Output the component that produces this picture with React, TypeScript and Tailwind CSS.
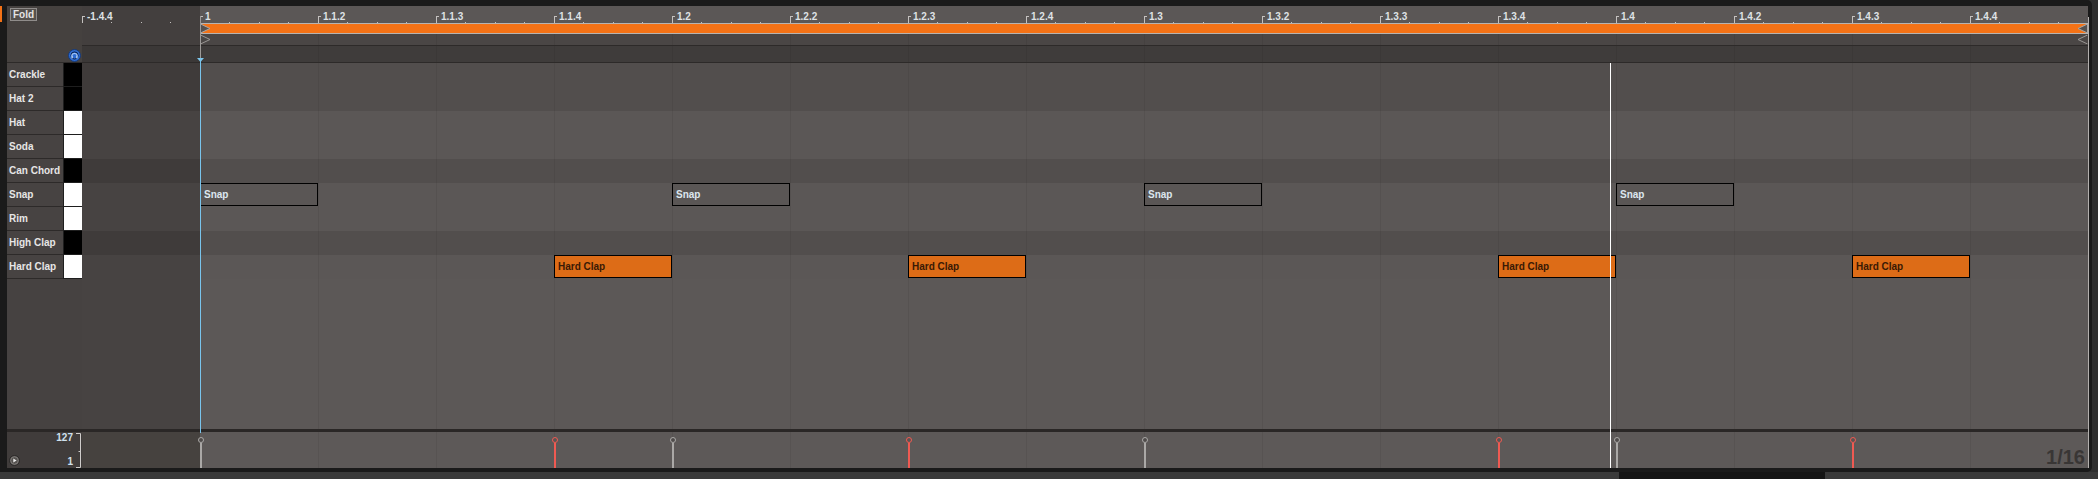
import React from "react";

const BEAT = 118;
const ROW = 24;

type Row = { name: string; black: boolean };

const rows: Row[] = [
  { name: "Crackle", black: true },
  { name: "Hat 2", black: true },
  { name: "Hat", black: false },
  { name: "Soda", black: false },
  { name: "Can Chord", black: true },
  { name: "Snap", black: false },
  { name: "Rim", black: false },
  { name: "High Clap", black: true },
  { name: "Hard Clap", black: false },
];

const rulerLabels = [
  "1", "1.1.2", "1.1.3", "1.1.4",
  "1.2", "1.2.2", "1.2.3", "1.2.4",
  "1.3", "1.3.2", "1.3.3", "1.3.4",
  "1.4", "1.4.2", "1.4.3", "1.4.4",
];

type Note = { row: number; beat: number; name: string; orange: boolean };

const notes: Note[] = [
  { row: 5, beat: 0, name: "Snap", orange: false },
  { row: 5, beat: 4, name: "Snap", orange: false },
  { row: 5, beat: 8, name: "Snap", orange: false },
  { row: 5, beat: 12, name: "Snap", orange: false },
  { row: 8, beat: 3, name: "Hard Clap", orange: true },
  { row: 8, beat: 6, name: "Hard Clap", orange: true },
  { row: 8, beat: 11, name: "Hard Clap", orange: true },
  { row: 8, beat: 14, name: "Hard Clap", orange: true },
];

function RulerCell({ label }: { label: string }) {
  return (
    <div className="relative w-[118px] shrink-0 pl-[5px] pt-[6px] text-[10px] font-bold leading-none text-[#dfe2e5]">
      <span className="absolute left-0 top-[10px] h-[7px] w-px bg-[#c4c1bf]" />
      <span className="absolute left-0 top-[10px] h-px w-[3px] bg-[#c4c1bf]" />
      <span className="absolute left-[29px] top-[16px] h-px w-px bg-[#c4c1bf]" />
      <span className="absolute left-[59px] top-[16px] h-px w-px bg-[#c4c1bf]" />
      <span className="absolute left-[88px] top-[16px] h-px w-px bg-[#c4c1bf]" />
      {label}
    </div>
  );
}

// faint vertical line on every beat
function BeatCells() {
  return (
    <div className="pointer-events-none absolute inset-0 flex">
      {rulerLabels.map((l, i) => (
        <div
          key={l}
          className={i === 0 ? "w-[118px] shrink-0" : "w-[118px] shrink-0 border-l border-black/[0.06]"}
        />
      ))}
    </div>
  );
}

function Stem({ beat, red }: { beat: number; red: boolean }) {
  return (
    <div
      className="absolute top-[5px] bottom-0 flex w-[6px] flex-col items-center"
      style={{ left: beat * BEAT - 2 }}
    >
      <div
        className={
          red
            ? "h-[6px] w-[6px] rounded-full border-[1.5px] border-[#ef5a52] bg-[#5a5453]"
            : "h-[6px] w-[6px] rounded-full border-[1.5px] border-[#aaa8a6] bg-[#4f4b4a]"
        }
      />
      <div className={red ? "w-[2px] flex-1 bg-[#ef5a52]" : "w-[2px] flex-1 bg-[#aaa8a6]"} />
    </div>
  );
}

function PreviewIcon() {
  return (
    <svg width="13" height="13" viewBox="0 0 13 13">
      <circle cx="6.5" cy="6.5" r="6" fill="#2d6bd3" stroke="#173a78" />
      <circle cx="6.5" cy="6.5" r="3.6" fill="none" stroke="#10244d" strokeWidth="1" />
      <path d="M3.8 7.2 A2.7 2.7 0 0 1 9.2 7.2" fill="none" stroke="#a9c9f6" strokeWidth="1.1" />
      <rect x="3.3" y="7" width="1.6" height="2.4" fill="#a9c9f6" />
      <rect x="8.1" y="7" width="1.6" height="2.4" fill="#a9c9f6" />
    </svg>
  );
}

function PlayIcon() {
  return (
    <svg width="11" height="11" viewBox="0 0 11 11">
      <circle cx="5.5" cy="5.5" r="5" fill="#55524f" stroke="#2b2928" />
      <circle cx="5.5" cy="5.5" r="3.8" fill="none" stroke="#8a8785" strokeWidth="0.8" />
      <path d="M4.3 3.4 L7.6 5.5 L4.3 7.6 Z" fill="#ececec" />
    </svg>
  );
}

export default function App() {
  return (
    <div className="h-[479px] w-[2098px] overflow-hidden bg-[#2f2f2f] font-['Liberation_Sans',Arial,sans-serif]">
      <div className="flex h-[472px] w-[2092px] rounded-r-[5px] bg-[#1a1a1a] pt-[6px] pb-[4px]">
        {/* left frame edge */}
        <div className="flex w-[7px] flex-col">
          <div className="h-[16px] w-[2px] bg-[#f47216]" />
        </div>

        {/* editor */}
        <div className="relative flex w-[2081px] flex-col">
          {/* ruler */}
          <div className="flex h-[57px]">
            <div className="flex w-[75px] flex-col justify-between border-b border-[#2d2a29] bg-[#45413f]">
              <div className="ml-[3px] mt-[2px] flex h-[13px] w-[27px] items-center justify-center border border-[#8f8c8a] bg-[#55514e] text-[10px] font-bold leading-none text-[#e4e4e4]">
                Fold
              </div>
              <div className="mr-[1px] self-end">
                <PreviewIcon />
              </div>
            </div>
            <div className="flex w-[118px] flex-col">
              <div className="flex h-[39px] bg-[#433f3e]">
                <RulerCell label="-1.4.4" />
              </div>
              <div className="h-[18px] border-y border-[#2d2a29] bg-[#3b3837]" />
            </div>
            <div className="flex w-[1888px] flex-col">
              <div className="flex h-[17px] bg-[#5b5756]">
                {rulerLabels.map((l) => (
                  <RulerCell key={l} label={l} />
                ))}
              </div>
              <div className="relative h-[11px] border-y border-[#b7b3b0] bg-[#f47216]">
                <svg className="absolute left-0 top-0" width="11" height="9" viewBox="0 0 11 9">
                  <path d="M0.5 0 L10 4.5 L0.5 9 Z" fill="#55514f" stroke="#a9a6a4" strokeWidth="1" />
                </svg>
                <svg className="absolute right-0 top-0" width="11" height="9" viewBox="0 0 11 9">
                  <path d="M10.5 0 L1 4.5 L10.5 9 Z" fill="#55514f" stroke="#a9a6a4" strokeWidth="1" />
                </svg>
              </div>
              <div className="relative h-[11px] bg-[#4a4645]">
                <BeatCells />
                <svg className="absolute left-0 top-[1px]" width="11" height="9" viewBox="0 0 11 9">
                  <path d="M0.5 0 L10 4.5 L0.5 9" fill="none" stroke="#9a9795" strokeWidth="1" />
                </svg>
                <svg className="absolute right-0 top-[1px]" width="11" height="9" viewBox="0 0 11 9">
                  <path d="M10.5 0 L1 4.5 L10.5 9" fill="none" stroke="#9a9795" strokeWidth="1" />
                </svg>
              </div>
              <div className="relative h-[18px] border-y border-[#2d2a29] bg-[#3f3c3b]">
                <BeatCells />
              </div>
            </div>
          </div>

          {/* note rows */}
          <div className="flex h-[366px]">
            <div className="flex w-[75px] flex-col bg-[#464241]">
              {rows.map((r) => (
                <div key={r.name} className="flex h-[24px]">
                  <div className="flex w-[56px] items-center border-b border-[#2d2a29] bg-[#474342] pl-[2px] text-[10px] font-bold leading-none text-[#e6e6e6]">
                    {r.name}
                  </div>
                  <div
                    className={
                      r.black
                        ? "w-[19px] border-b border-l border-[#1e1e1e] bg-black"
                        : "w-[19px] border-b border-l border-[#1e1e1e] bg-white"
                    }
                  />
                </div>
              ))}
            </div>
            <div className="flex w-[118px] flex-col bg-[#474342]">
              {rows.map((r) => (
                <div key={r.name} className={r.black ? "h-[24px] bg-[#3f3b3a]" : "h-[24px] bg-[#474342]"} />
              ))}
            </div>
            <div className="relative flex w-[1888px] flex-col bg-[#5c5857]">
              {rows.map((r) => (
                <div key={r.name} className={r.black ? "h-[24px] bg-[#524e4d]" : "h-[24px] bg-[#5b5756]"} />
              ))}
              <BeatCells />
              {notes.map((n) => (
                <div
                  key={n.row + "-" + n.beat}
                  className={
                    n.orange
                      ? "absolute flex h-[23px] w-[118px] items-center border border-black bg-[#dd6c17] pl-[3px] text-[10px] font-bold leading-none text-[#3a1a05]"
                      : "absolute flex h-[23px] w-[118px] items-center border border-black bg-[#5a5655] pl-[3px] text-[10px] font-bold leading-none text-[#dce6ef]"
                  }
                  style={{ left: n.beat * BEAT, top: n.row * ROW }}
                >
                  {n.name}
                </div>
              ))}
            </div>
          </div>

          {/* lane separator */}
          <div className="h-[3px] bg-[#2a2726]" />

          {/* velocity lane */}
          <div className="flex h-[36px]">
            <div className="flex w-[75px] bg-[#403c3b]">
              <div className="flex flex-1 items-end pb-[2px] pl-[2px]">
                <PlayIcon />
              </div>
              <div className="flex flex-col items-end justify-between py-[1px] text-[10px] font-bold leading-none text-[#cfe0ee]">
                <span>127</span>
                <span>1</span>
              </div>
              <svg className="ml-[3px] mr-[1px]" width="5" height="36" viewBox="0 0 5 36">
                <path d="M0 1.5 H4.5 V35.5 H0 M2.5 19.5 H4.5" fill="none" stroke="#cfcdcb" strokeWidth="1" />
              </svg>
            </div>
            <div className="w-[118px] bg-[#46423f]" />
            <div className="relative w-[1888px] bg-[#5d5958]">
              <BeatCells />
              {notes.map((n) => (
                <Stem key={n.row + "-" + n.beat} beat={n.beat} red={n.orange} />
              ))}
              <span className="absolute bottom-[1.5px] right-[3px] text-[20px] font-bold leading-none text-[#393635]">
                1/16
              </span>
            </div>
          </div>

          {/* start marker and playhead */}
          <div className="absolute left-[193px] top-[10px] h-[42px] w-px bg-[#9c9a98]" />
          <svg className="absolute left-[190px] top-[52px]" width="7" height="4" viewBox="0 0 7 4">
            <path d="M0 0 H7 L3.5 4 Z" fill="#7cc7ee" />
          </svg>
          <div className="absolute left-[193px] top-[52px] h-[375px] w-px bg-[#79c4ec]" />
          <div className="absolute left-[1603px] top-[57px] h-[405px] w-px bg-white" />
        </div>

        {/* right frame edge */}
        <div className="mt-[11px] w-px bg-[#b3b0ae]" />
      </div>

      {/* scroll strip */}
      <div className="flex h-[7px] bg-[#3a3a3a]">
        <div className="w-[1619px]" />
        <div className="w-[206px] bg-[#151515]" />
      </div>
    </div>
  );
}
